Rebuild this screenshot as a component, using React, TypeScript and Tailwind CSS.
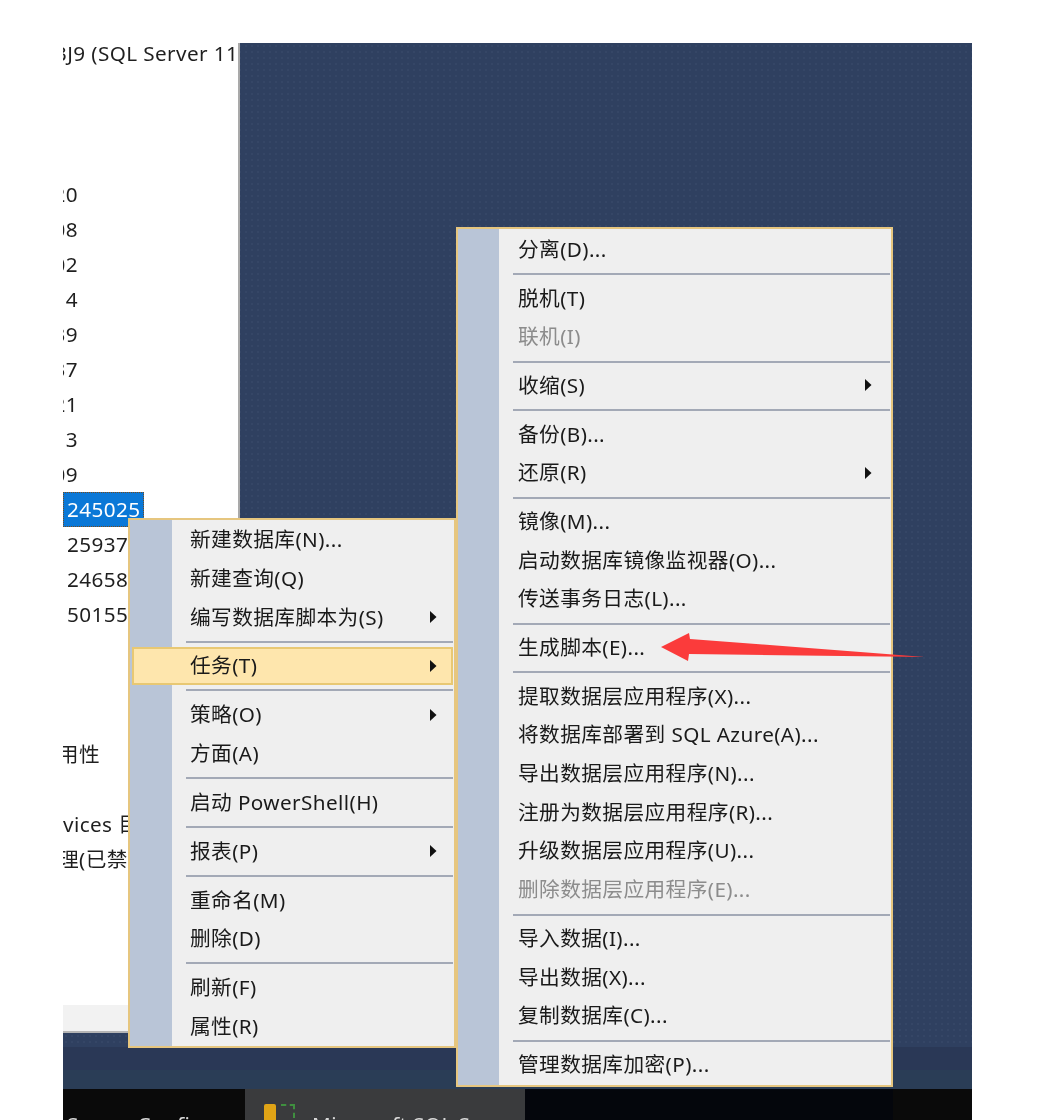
const font = "font-['Noto_Sans','Noto_Sans_CJK_SC',sans-serif]";

type Entry = { label?: string; sep?: boolean; arrow?: boolean; disabled?: boolean; active?: boolean };

const dbMenu: Entry[] = [
  { label: "新建数据库(N)..." },
  { label: "新建查询(Q)" },
  { label: "编写数据库脚本为(S)", arrow: true },
  { sep: true },
  { label: "任务(T)", arrow: true, active: true },
  { sep: true },
  { label: "策略(O)", arrow: true },
  { label: "方面(A)" },
  { sep: true },
  { label: "启动 PowerShell(H)" },
  { sep: true },
  { label: "报表(P)", arrow: true },
  { sep: true },
  { label: "重命名(M)" },
  { label: "删除(D)" },
  { sep: true },
  { label: "刷新(F)" },
  { label: "属性(R)" },
];

const taskMenu: Entry[] = [
  { label: "分离(D)..." },
  { sep: true },
  { label: "脱机(T)" },
  { label: "联机(I)", disabled: true },
  { sep: true },
  { label: "收缩(S)", arrow: true },
  { sep: true },
  { label: "备份(B)..." },
  { label: "还原(R)", arrow: true },
  { sep: true },
  { label: "镜像(M)..." },
  { label: "启动数据库镜像监视器(O)..." },
  { label: "传送事务日志(L)..." },
  { sep: true },
  { label: "生成脚本(E)..." },
  { sep: true },
  { label: "提取数据层应用程序(X)..." },
  { label: "将数据库部署到 SQL Azure(A)..." },
  { label: "导出数据层应用程序(N)..." },
  { label: "注册为数据层应用程序(R)..." },
  { label: "升级数据层应用程序(U)..." },
  { label: "删除数据层应用程序(E)...", disabled: true },
  { sep: true },
  { label: "导入数据(I)..." },
  { label: "导出数据(X)..." },
  { label: "复制数据库(C)..." },
  { sep: true },
  { label: "管理数据库加密(P)..." },
];

const treeRows = ["20", "08", "02", "4", "39", "37", "21", "3", "09"];

const Arrow = () => (
  <svg width="8" height="12" viewBox="0 0 8 12" className="relative shrink-0">
    <path d="M1 0 L7.5 6 L1 12 Z" fill="#111" />
  </svg>
);

const Menu = ({
  items,
  className,
  gutter,
  rowClass,
  sepClass,
}: {
  items: Entry[];
  className: string;
  gutter: string;
  rowClass: string;
  sepClass: string;
}) => (
  <div className={`absolute flex flex-col border-2 border-[#e6c67f] bg-[#efefef] ${className}`}>
    <div className={`absolute left-0 top-0 bottom-0 bg-[#b9c5d7] ${gutter}`} />
    {items.map((item, i) =>
      item.sep ? (
        <div key={i} className="relative flex h-[10px] items-center">
          <div className={`h-[2px] flex-1 bg-[#a3a9b6] ${sepClass}`} />
        </div>
      ) : (
        <div
          key={i}
          className={`relative flex items-center justify-between whitespace-nowrap pl-[60px] text-[20.7px] tracking-[0.4px] ${rowClass} ${
            item.disabled ? "text-[#8c8c8c]" : "text-[#1a1a1a]"
          }`}
        >
          {item.active && (
            <div className="absolute inset-y-0 left-[2px] right-[1px] border-2 border-[#e8c873] bg-[#fee6ad]" />
          )}
          <span className="relative">{item.label}</span>
          {item.arrow && <Arrow />}
        </div>
      ),
    )}
  </div>
);

export default function App() {
  return (
    <div className={`relative h-[1120px] w-[1038px] overflow-hidden bg-white blur-[0.4px] ${font}`}>
      <div className="ml-[63px] flex h-[1120px] w-[909px] flex-col pt-[43px]">
        <div className="flex h-[1004px] items-start bg-[#2f4060] bg-[radial-gradient(#354666_1px,transparent_1.4px)] bg-[size:6px_6px]">
          <div className="flex h-[990px] w-[177px] shrink-0 flex-col border-r-2 border-[#a9a9a9]">
            <div className="flex-1 overflow-hidden bg-white text-[20.7px] tracking-[0.4px] text-[#1f1f1f]">
              <div className="-ml-[8px] flex h-[22px] items-center whitespace-nowrap">
                <span>3J9 (SQL Server 11</span>
              </div>
              <div className="h-[112px]" />
              {treeRows.map((row, i) => (
                <div key={i} className="flex h-[35px] w-[15px] items-center justify-end overflow-hidden whitespace-nowrap">
                  <span className="shrink-0">1{row}</span>
                </div>
              ))}
              <div className="flex h-[35px] w-[81px] items-center border border-dotted border-[#7a4a1a] bg-[#0a78d7] pl-[3px] text-white">
                245025
              </div>
              <div className="flex h-[35px] items-center pl-[4px]">25937</div>
              <div className="flex h-[35px] items-center pl-[4px]">24658</div>
              <div className="flex h-[35px] items-center pl-[4px]">50155</div>
              <div className="h-[105px]" />
              <div className="flex h-[35px] w-[37px] items-center justify-end overflow-hidden whitespace-nowrap">
                <span className="shrink-0">可用性</span>
              </div>
              <div className="h-[35px]" />
              <div className="flex h-[35px] items-center whitespace-nowrap">vices 目录</div>
              <div className="-ml-[5px] flex h-[35px] items-center whitespace-nowrap">理(已禁用)</div>
            </div>
            <div className="h-[28px] border-b-2 border-[#b5b5b5] bg-[#f2f2f2]" />
          </div>
        </div>
        <div className="h-[23px] bg-[#2a3856]" />
        <div className="h-[19px] bg-[#2a3d56]" />
        <div className="flex h-[31px] items-start overflow-hidden bg-[#0a0a0a] text-[20.7px] tracking-[0.4px] text-[#d8d8d8]">
          <div className="h-[31px] w-[182px] overflow-hidden whitespace-nowrap pl-[4px] pt-[20px]">Server Config</div>
          <div className="flex h-[31px] w-[280px] items-start whitespace-nowrap bg-[#3a3b3d] pl-[19px] pt-[15px]">
            <div className="flex w-[48px] shrink-0 items-start gap-[5px]">
              <div className="h-[17px] w-[12px] rounded-t-[2px] bg-[#e0a416]" />
              <div className="h-[14px] w-[14px] border-r-2 border-t-2 border-dashed border-[#3f8f3f]" />
            </div>
            <span className="pt-[5px]">Microsoft SQL Se</span>
          </div>
          <div className="h-[31px] w-[368px] bg-[#04060c]" />
        </div>
      </div>

      <Menu
        items={dbMenu}
        className="left-[128px] top-[518px] h-[530px] w-[328px]"
        gutter="w-[42px]"
        rowClass="h-[38.9px] pr-[17px]"
        sepClass="ml-[56px] mr-[1px]"
      />
      <Menu
        items={taskMenu}
        className="left-[456px] top-[227px] h-[860px] w-[437px] pt-[1px]"
        gutter="w-[41px]"
        rowClass="h-[38.7px] pr-[19px]"
        sepClass="ml-[55px] mr-[1px] mt-[1px]"
      />

      <svg className="absolute left-[655px] top-[625px]" width="280" height="45" viewBox="0 0 280 45">
        <path d="M6 22 L34 8 L35 14 L270 32 L34 29 L33 36 Z" fill="#fb3b3b" />
      </svg>
    </div>
  );
}
